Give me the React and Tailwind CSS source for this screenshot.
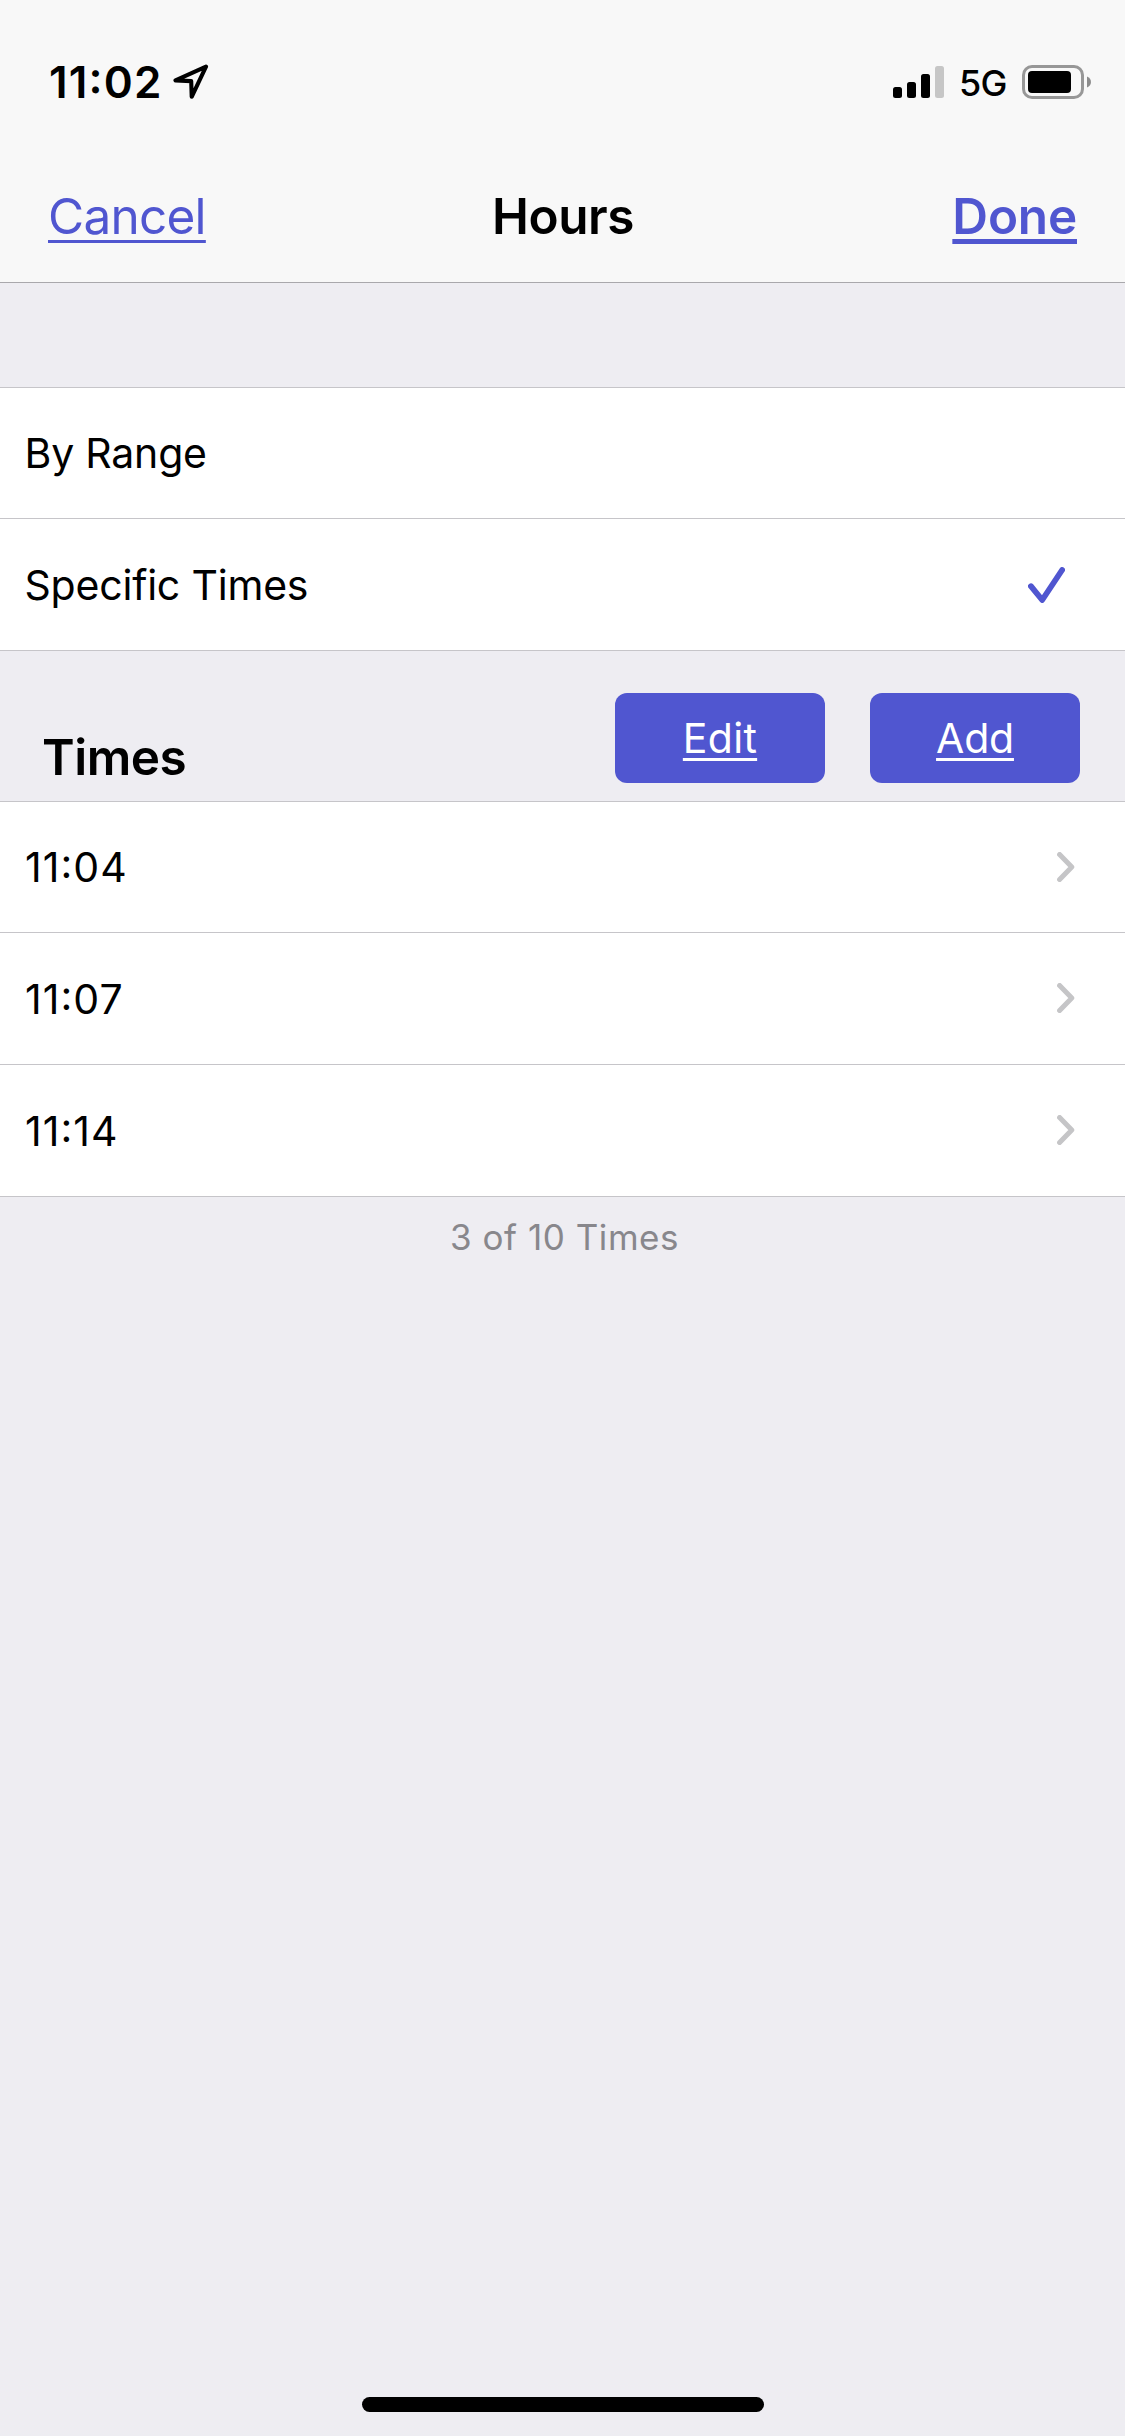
import React, { useState } from 'react';

const modes = ['By Range', 'Specific Times'];
const times = ['11:04', '11:07', '11:14'];
const MAX_TIMES = 10;

const LocationIcon = () => (
  <svg className="w-[36px] h-[36px]" viewBox="0 0 36 36" fill="none" stroke="#000" strokeWidth="4.1" strokeLinejoin="round">
    <path d="M33 2.6 L2.5 16.4 L18.2 17.1 L18.7 32.8 Z" />
  </svg>
);

const SignalIcon = () => (
  <svg className="w-[51px] h-[32px]" viewBox="0 0 51 32">
    <rect x="0" y="21" width="9" height="11" rx="2.5" />
    <rect x="14" y="16" width="9" height="16" rx="2.5" />
    <rect x="28" y="8" width="9" height="24" rx="2.5" />
    <rect x="42" y="0" width="9" height="32" rx="2.5" fill="#c6c6c6" />
  </svg>
);

const BatteryIcon = () => (
  <svg className="w-[69px] h-[34px]" viewBox="0 0 69 34">
    <rect x="1.5" y="1.5" width="59" height="31" rx="8.5" fill="none" stroke="#979797" strokeWidth="3" />
    <rect x="6" y="6" width="43" height="22" rx="4" />
    <path d="M65 11.5 C70.3 13.5 70.3 20.5 65 22.5 Z" fill="#8c8c8c" />
  </svg>
);

const CheckIcon = () => (
  <svg className="w-[37px] h-[36px]" viewBox="0 0 37 36" fill="none" stroke="#5056d0" strokeWidth="5.8" strokeLinecap="round" strokeLinejoin="round">
    <path d="M2.9 19.2 L14.2 33 L34.1 3" />
  </svg>
);

const ChevronIcon = () => (
  <svg className="w-[18px] h-[30px] mb-px" viewBox="0 0 18 30" fill="none" stroke="#c5c5c7" strokeWidth="5" strokeLinecap="round" strokeLinejoin="round">
    <path d="M2.6 2.5 L14.8 15 L2.6 27.5" />
  </svg>
);

// Fixed width action button used in the section header
const ActionButton = ({ label, className }) => (
  <button
    type="button"
    className={`w-[210px] h-[90px] rounded-[12px] bg-[#5056d0] text-white text-[41px] leading-[50px] underline decoration-[3px] underline-offset-[5px] ${className}`}
  >
    {label}
  </button>
);

const App = () => {
  const [mode, setMode] = useState('Specific Times');

  return (
    <div className="flex flex-col w-[1125px] h-[2436px] bg-[#eeedf2] text-black font-['Inter',sans-serif] [text-decoration-skip-ink:none]">
      <header className="h-[283px] shrink-0 bg-[#f8f8f8] border-b border-[#a9a8ac]">
        {/* Status bar */}
        <div className="flex items-center justify-between h-[150px] pt-[14px] pl-[49px] pr-[34px]">
          <div className="flex items-center">
            <span className="w-[124px] text-[44px] leading-[54px] font-semibold tracking-[1.2px] [font-feature-settings:'calt']">11:02</span>
            <LocationIcon />
          </div>
          <div className="flex items-center">
            <SignalIcon />
            <span className="w-[78px] pl-[15px] pt-px text-[36px] leading-[44px] font-medium tracking-[-0.7px]">5G</span>
            <BatteryIcon />
          </div>
        </div>

        {/* Navigation bar */}
        <nav className="grid grid-cols-3 items-center h-[132px] px-12 text-[49.5px] leading-[60px]">
          <button type="button" className="justify-self-start text-[#5056d0] tracking-[-0.75px] underline decoration-[3px] underline-offset-[6px]">
            Cancel
          </button>
          <h1 className="pl-px text-center font-semibold tracking-[-0.4px]">Hours</h1>
          <button type="button" className="justify-self-end text-[#5056d0] font-semibold tracking-[-0.2px] underline decoration-[5px] underline-offset-[5px]">
            Done
          </button>
        </nav>
      </header>

      {/* Mode selection */}
      <ul className="mt-[104px] border-t border-[#c6c5c9]">
        {modes.map((item) => (
          <li
            key={item}
            onClick={() => setMode(item)}
            className="flex items-center justify-between h-[132px] first:h-[131px] pl-[24.5px] pr-[60px] bg-white border-b border-[#c6c5c9] text-[41px] leading-[50px] tracking-[-0.2px]"
          >
            {item}
            {mode === item && <CheckIcon />}
          </li>
        ))}
      </ul>

      {/* Times */}
      <section>
        <div className="flex items-end h-[151px] pl-[42px] pr-[45px] border-b border-[#c6c5c9]">
          <h2 className="pb-[14px] text-[49.5px] leading-[60px] font-semibold tracking-[-0.5px]">Times</h2>
          <div className="flex gap-[45px] ml-auto pb-[18px]">
            <ActionButton label="Edit" className="tracking-[0.3px]" />
            <ActionButton label="Add" className="tracking-[-0.2px]" />
          </div>
        </div>
        <ul>
          {times.map((time) => (
            <li
              key={time}
              className="flex items-center justify-between h-[132px] first:h-[131px] pl-[25px] pr-[50px] bg-white border-b border-[#c6c5c9] text-[41px] leading-[50px] tracking-[1.05px] [font-feature-settings:'calt']"
            >
              {time}
              <ChevronIcon />
            </li>
          ))}
        </ul>
        <p className="pt-[19px] pl-[4px] text-center text-[35px] leading-[42px] tracking-[0.55px] text-[#88878c]">
          {times.length} of {MAX_TIMES} Times
        </p>
      </section>

      {/* Home indicator */}
      <div className="w-[402px] h-[15px] mt-auto mb-[24px] mx-auto rounded-full bg-black" />
    </div>
  );
};

export default App;
